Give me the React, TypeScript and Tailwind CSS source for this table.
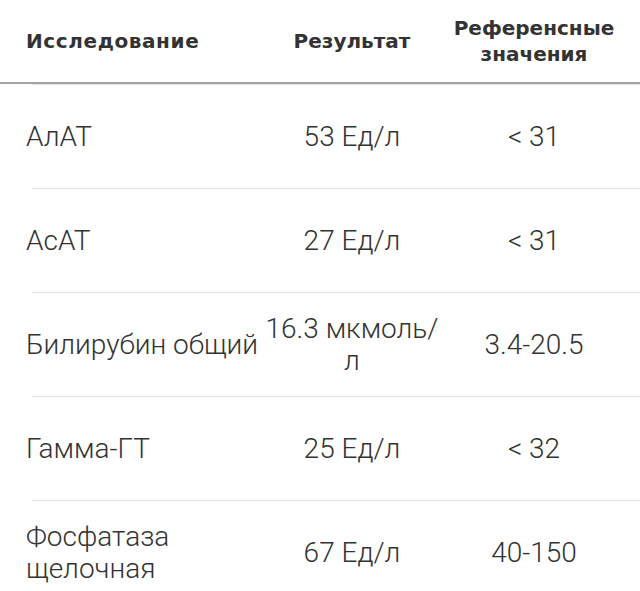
import React from 'react';

type Row = { name: React.ReactNode; result: React.ReactNode; ref: string };

const rows: Row[] = [
  { name: 'АлАТ', result: '53 Ед/л', ref: '< 31' },
  { name: 'АсАТ', result: '27 Ед/л', ref: '< 31' },
  {
    name: 'Билирубин общий',
    result: (
      <>
        16.3 мкмоль/<wbr />л
      </>
    ),
    ref: '3.4-20.5',
  },
  { name: 'Гамма-ГТ', result: '25 Ед/л', ref: '< 32' },
  { name: 'Фосфатаза щелочная', result: '67 Ед/л', ref: '40-150' },
];

export default function App() {
  return (
    <div className="w-[640px] h-[591px] overflow-hidden bg-white text-[#333]">
      {/* header */}
      <div
        className="grid grid-cols-[264px_176px_188px] h-[84px] items-center border-b-2 border-[#a3a3a3] font-bold text-[20px] leading-[26px]"
        style={{ fontFamily: '"DejaVu Sans", "Liberation Sans", sans-serif' }}
      >
        <div className="pl-[26px] tracking-[0.6px]">Исследование</div>
        <div className="text-center">Результат</div>
        <div className="text-center">
          Референсные
          <br />
          значения
        </div>
      </div>

      {/* body */}
      <div className="font-light text-[28px] leading-[32px]" style={{ fontFamily: 'Roboto, "Liberation Sans", sans-serif' }}>
        {rows.map((r, i) => (
          <div key={i} className="ml-[32px] border-t border-[#e3e3e3]">
            <div className="-ml-[32px] grid grid-cols-[264px_176px_188px] h-[103px] items-center">
              <div className="pl-[26px]">{r.name}</div>
              <div className="text-center">{r.result}</div>
              <div className="text-center">{r.ref}</div>
            </div>
          </div>
        ))}
      </div>
    </div>
  );
}
